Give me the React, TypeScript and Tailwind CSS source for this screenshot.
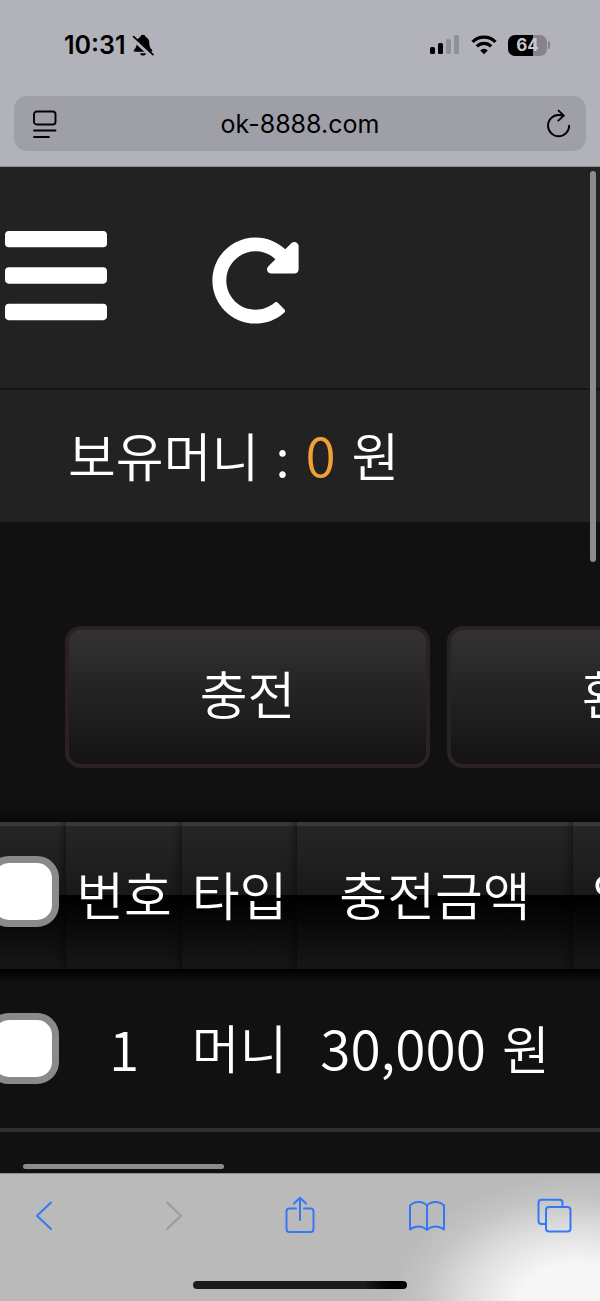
import React from 'react';
import { FaBars, FaRedoAlt } from 'react-icons/fa';

const headers = ['번호', '타입', '충전금액', '입금자'];
const rows = [{ id: 1, type: '머니', amount: '30,000', depositor: '' }];

function StatusBar() {
  return (
    <div className="flex items-center justify-between pl-16 pr-[50px] pt-[34px] h-14">
      <div className="flex items-center gap-[5px]">
        <span className="text-[25px] leading-6 font-semibold">10:31</span>
        <svg className="w-6 h-6" viewBox="0 0 24 24" fill="none">
          <path
            d="M12 1.8c-1.4 0-2.5.9-2.7 2.1C6.9 4.9 5.7 7 5.7 9.800c0 4-1 5.300-2.500 6.700-.9.9-.5 2.300.9 2.300h15.800c1.400 0 1.800-1.400.9-2.300-1.500-1.400-2.500-2.700-2.500-6.700 0-2.800-1.200-4.900-3.600-5.900C14.500 2.700 13.400 1.800 12 1.800zM8.900 20.300c.5 1.500 1.600 2.300 3.100 2.300s2.600-.8 3.100-2.300z"
            fill="#000"
          />
          <path d="M1.500 4.800 20.500 22.300" stroke="#b2b2ba" strokeWidth="4.400" />
          <path d="M2.600 3.600 22 21.600" stroke="#000" strokeWidth="1.700" strokeLinecap="round" />
        </svg>
      </div>

      <div className="flex items-center gap-[11px]">
        <svg className="w-[31px] h-5" viewBox="0 0 31 20">
          <rect x="1" y="12" width="5" height="7" rx="1.500" />
          <rect x="9" y="8" width="5" height="11" rx="1.500" />
          <rect x="17" y="4" width="5" height="15" rx="1.500" fill="#909097" />
          <rect x="25" y="0" width="5" height="19" rx="1.500" fill="#909097" />
        </svg>
        <svg className="w-[26px] h-5" viewBox="0 0 26 20" fill="none" stroke="#000" strokeWidth="3.200">
          <path d="M1.500 6.800a16.300 16.300 0 0 1 23 0" />
          <path d="M5.800 11.400a10.200 10.200 0 0 1 14.400 0" />
          <path d="M13 19.200 9.200 15.400a5.400 5.400 0 0 1 7.600 0z" fill="#000" stroke="none" />
        </svg>
        <div className="flex items-center gap-px">
          <div className="flex items-center justify-center w-[39px] h-[21px] rounded-[7px] bg-linear-to-r from-black from-65% to-[#84848a] to-65%">
            <span className="text-[17px] leading-5 font-bold text-[#c8c8ce]">64</span>
          </div>
          <span className="w-[2px] h-2 rounded-r-full bg-[#84848a]" />
        </div>
      </div>
    </div>
  );
}

function AddressBar() {
  return (
    <div className="mx-[14px] mt-10 h-[55px] px-4 rounded-[13px] bg-[#9f9fa8] flex items-center justify-between">
      <button aria-label="Page menu" className="w-7 h-8">
        <svg className="w-7 h-8" viewBox="0 0 28 32" fill="none" stroke="#000" strokeWidth="1.900" strokeLinecap="round">
          <rect x="4" y="3.500" width="21.500" height="13" rx="2.800" />
          <path d="M4 22.500h21.500M4 29h15" />
        </svg>
      </button>
      <span className="text-[25px] leading-8">ok-8888.com</span>
      <button aria-label="Reload" className="w-7 h-8">
        <svg className="w-7 h-8 overflow-visible" viewBox="0 0 28 32" fill="none" stroke="#000" strokeWidth="1.900" strokeLinecap="round" strokeLinejoin="round">
          <path d="M27.200 17.600A10.600 10.600 0 1 1 16.600 7c1.700 0 3.300.2 4.800.8" />
          <path d="M16.600 2.600 21.800 7.600l-5.500 5" />
        </svg>
      </button>
    </div>
  );
}

function CheckCell({ label }: { label: string }) {
  return (
    <input
      type="checkbox"
      aria-label={label}
      className="block mx-auto w-[72px] h-[71px] appearance-none rounded-[22px] border-[7px] border-[#8a8a8c] bg-white"
    />
  );
}

function ChargeTable() {
  return (
    <table className="table-fixed w-[774px] -ml-5 border-separate border-spacing-0 text-center">
      <colgroup>
        <col className="w-[86px]" />
        <col className="w-[116px]" />
        <col className="w-[115px]" />
        <col className="w-[276px]" />
        <col />
      </colgroup>
      <thead className="shadow-[0_0_16px_#000]">
        <tr className="h-[147px]">
          <th className="p-0 pb-2 bg-[linear-gradient(#3a3a3a_4px,#262626_4px,#191919_50%,#000_50%,#171717)] shadow-[inset_-8px_0_8px_-6px_#00000080]">
            <CheckCell label="전체 선택" />
          </th>
          {headers.map((h) => (
            <th
              key={h}
              className="p-0 pb-1 font-[350] bg-[linear-gradient(#3a3a3a_4px,#262626_4px,#191919_50%,#000_50%,#171717)] shadow-[inset_-8px_0_8px_-6px_#00000080]"
            >
              {h}
            </th>
          ))}
        </tr>
      </thead>
      <tbody>
        {rows.map((row) => (
          <tr key={row.id} className="h-[163px] *:p-0 *:border-b-4 *:border-[#303030] *:bg-[linear-gradient(#000,#111_14px)] *:bg-no-repeat">
            <td>
              <CheckCell label={`${row.id} 선택`} />
            </td>
            <td>
              <div className="pb-1 text-[55px]">{row.id}</div>
            </td>
            <td>
              <div className="pb-1">{row.type}</div>
            </td>
            <td>
              <div className="pb-1 flex items-baseline justify-center gap-4">
                <span className="text-[55px]">{row.amount}</span>
                <span>원</span>
              </div>
            </td>
            <td>{row.depositor}</td>
          </tr>
        ))}
      </tbody>
    </table>
  );
}

function Toolbar() {
  return (
    <footer className="relative h-32 border-t border-[#8d8d8d] bg-[#bababa] bg-[radial-gradient(ellipse_185px_125px_at_575px_100%,#f6f6f6_30%,#dedede_58%,#c4c4c4_82%,#bababa)] text-[#3478f6]">
      <nav className="flex items-center justify-between pt-5 pl-6 pr-[27px]">
        <button aria-label="Back">
          <svg className="w-10 h-11" viewBox="0 0 40 44" fill="none" stroke="currentColor" strokeWidth="2" strokeLinecap="round" strokeLinejoin="round">
            <path d="M27 8.500 13 21.800 27 35" />
          </svg>
        </button>
        <button aria-label="Forward" className="text-[#9b9b9b]">
          <svg className="w-10 h-11" viewBox="0 0 40 44" fill="none" stroke="currentColor" strokeWidth="2" strokeLinecap="round" strokeLinejoin="round">
            <path d="M16 8.500 30 21.800 16 35" />
          </svg>
        </button>
        <button aria-label="Share">
          <svg className="w-10 h-11" viewBox="0 0 40 44" fill="none" stroke="currentColor" strokeWidth="2" strokeLinecap="round" strokeLinejoin="round">
            <path d="M17 14.500H10.500c-1.800 0-3 1.200-3 3V35c0 1.800 1.200 3 3 3h21c1.800 0 3-1.200 3-3V17.500c0-1.800-1.200-3-3-3H25" />
            <path d="M21 26V4M15 9.500l6-5.800 6 5.800" />
          </svg>
        </button>
        <button aria-label="Bookmarks">
          <svg className="w-10 h-11" viewBox="0 0 40 44" fill="none" stroke="currentColor" strokeWidth="2" strokeLinecap="round" strokeLinejoin="round">
            <path d="M21 11.500C18.800 9 15.800 8 12.500 8c-3.400 0-6.300 1.200-8.500 3.500V35.500c2.500-2 5.200-3 8.500-3s6.200 1.200 8.500 3.500c2.300-2.300 5.300-3.500 8.500-3.500s6 1 8.500 3V11.500C35.800 9.200 32.800 8 29.500 8c-3.300 0-6.300 1-8.500 3.500zV36" />
          </svg>
        </button>
        <button aria-label="Tabs">
          <svg className="w-10 h-11" viewBox="0 0 40 44" fill="none" stroke="currentColor" strokeWidth="2" strokeLinejoin="round">
            <path d="M12.500 30H8.500c-2 0-3-1-3-3V8.800c0-2 1-3 3-3H26.500c2 0 3 1 3 3V13" />
            <rect x="13" y="13" width="24.500" height="24.500" rx="3" />
          </svg>
        </button>
      </nav>
      <div className="absolute bottom-3 left-1/2 -translate-x-1/2 w-[214px] h-2 rounded-full bg-linear-to-r from-[#1c1c1c] from-80% to-black" />
    </footer>
  );
}

export default function App() {
  return (
    <div className="min-h-screen flex flex-col overflow-hidden bg-[#111111] font-['Inter','Noto_Sans_CJK_KR',sans-serif] text-black">
      <header className="h-[167px] bg-[#b2b2ba] border-b border-[#8b8b90]">
        <StatusBar />
        <AddressBar />
      </header>

      <main className="relative flex-1 overflow-hidden text-white font-[350] text-[52px] leading-[76px] font-['Noto_Sans_CJK_KR',sans-serif]">
        <div className="h-[223px] bg-[#222222] border-b-2 border-[#141414] pl-[5px] pt-[50px] flex items-start">
          <button aria-label="메뉴">
            <FaBars className="w-[102px] h-[117px]" />
          </button>
          <button aria-label="새로고침" className="ml-[104px] mt-[19px]">
            <FaRedoAlt className="w-[89px] h-[89px]" />
          </button>
        </div>

        <div className="h-[132px] bg-[#222222] pl-[68px] pb-1 flex items-center">
          <p className="flex items-baseline gap-4 whitespace-nowrap">
            <span>보유머니</span>
            <span>:</span>
            <span className="text-[55px] text-[#f0a035]">0</span>
            <span>원</span>
          </p>
        </div>

        <div className="flex gap-[17px] pl-[65px] pt-[104px] pb-[54px]">
          <button className="shrink-0 w-[365px] h-[142px] pb-2 rounded-2xl border-4 border-[#2a2122] bg-linear-to-b from-[#323232] to-[#131313]">
            충전
          </button>
          <button className="shrink-0 w-[365px] h-[142px] pb-2 rounded-2xl border-4 border-[#2a2122] bg-linear-to-b from-[#323232] to-[#131313]">
            환전
          </button>
        </div>

        <ChargeTable />

        {/* Scroll indicators */}
        <div className="absolute top-1 right-1 w-[6px] h-[391px] rounded-full bg-[#8c8c8c]" />
        <div className="absolute bottom-1 left-[23px] w-[201px] h-[5px] rounded-full bg-[#8c8c8c]" />
      </main>

      <Toolbar />
    </div>
  );
}
